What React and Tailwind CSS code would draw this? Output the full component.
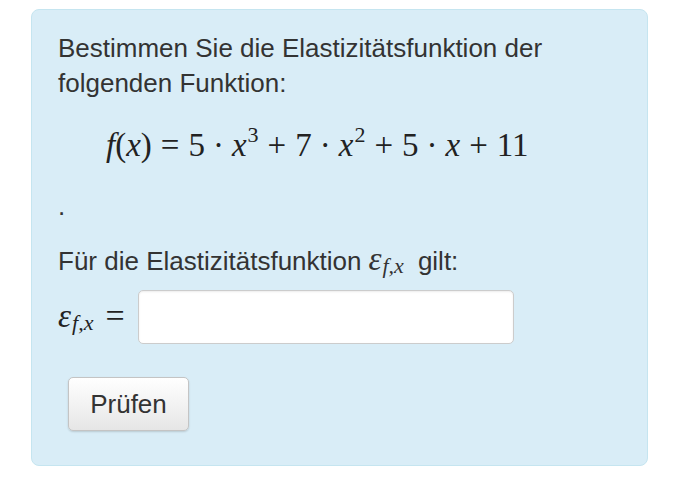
export default function App() {
    const serif = {fontFamily: '"Liberation Serif", "Times New Roman", serif'};

    const Eps = ({className = ""}) => (
        <span className={"whitespace-nowrap " + className} style={serif}>
            <i className="text-[33px]">ε</i>
            <sub className="text-[22px] italic relative top-[3px] ml-[1px]">f,x</sub>
        </span>
    );

    const Op = ({children}) => <span className="mx-[9px]">{children}</span>;
    const Dot = () => <span className="mx-[8px]">·</span>;

    return (
        <div className="w-[680px] h-[493px] bg-white pt-[9px] pl-[31px]" style={{fontFamily: '"Liberation Sans", Arial, sans-serif'}}>
            <div className="w-[617px] h-[457px] bg-[#d9edf7] border border-[#c5e5f0] rounded-[8px] px-[26px] pt-[21px] text-[#333] text-[26px] leading-[35px]">
                <p>Bestimmen Sie die Elastizitätsfunktion der<br/>folgenden Funktion:</p>

                <div className="pl-[48px] pt-[24px] text-[33px] leading-[40px] text-[#222] whitespace-nowrap" style={serif}>
                    <i>f</i>(<i>x</i>)<Op>=</Op>5<Dot/><i>x</i><sup className="text-[22px] -top-[0.65em] ml-[1px]">3</sup><Op>+</Op>7<Dot/><i>x</i><sup className="text-[22px] -top-[0.65em] ml-[1px]">2</sup><Op>+</Op>5<Dot/><i>x</i><Op>+</Op>11
                </div>

                <p className="pt-[24px]">.</p>

                <p className="pt-[18px] flex items-baseline">
                    <span>Für die Elastizitätsfunktion</span>
                    <Eps className="ml-[7px] mr-[14px]"/>
                    <span>gilt:</span>
                </p>

                <div className="flex items-center mt-[11px]">
                    <div className="w-[80px] flex items-baseline text-[#222]">
                        <Eps/>
                        <span className="text-[34px] ml-[12px]" style={serif}>=</span>
                    </div>
                    <input className="w-[376px] h-[54px] bg-white border border-[#ccc] rounded-[5px] shadow-[inset_0_1px_2px_rgba(0,0,0,0.08)]"/>
                </div>

                <button className="mt-[33px] ml-[10px] w-[121px] h-[54px] rounded-[5px] border border-[#c4c4c4] bg-gradient-to-b from-white to-[#e6e6e6] shadow-[0_1px_2px_rgba(0,0,0,0.15)] text-[26px] text-[#333]">
                    Prüfen
                </button>
            </div>
        </div>
    );
}
